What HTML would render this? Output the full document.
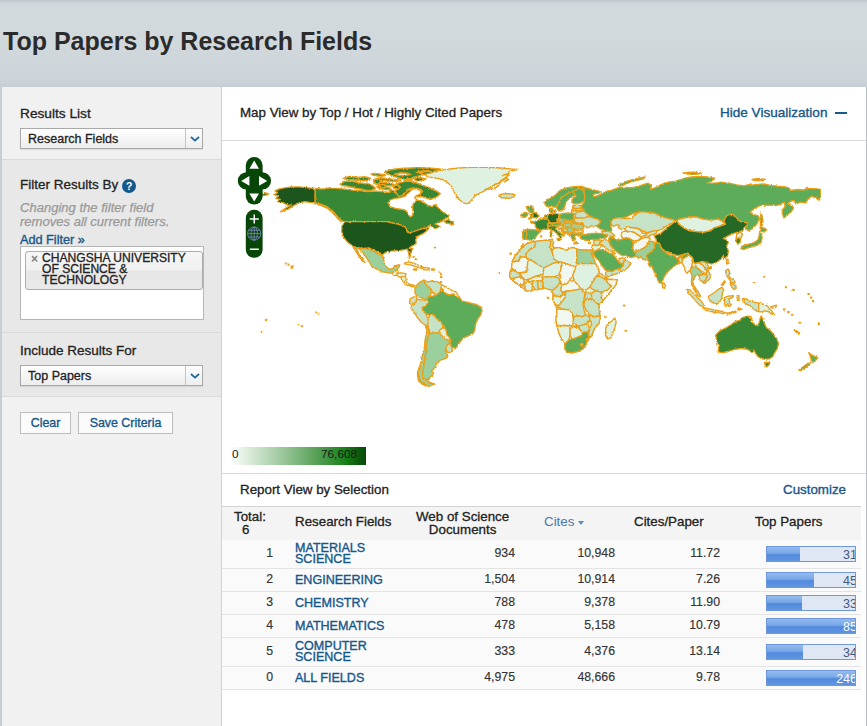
<!DOCTYPE html>
<html>
<head>
<meta charset="utf-8">
<title>Top Papers by Research Fields</title>
<style>
*{box-sizing:border-box;margin:0;padding:0}
html,body{width:867px;height:726px;overflow:hidden}
body{font-family:"Liberation Sans",sans-serif;color:#222;position:relative;
background:linear-gradient(to bottom,#bdc4ca 0,#cbd2d7 2px,#d2d9dd 4px,#d3dade 8px,#d2d9dd 40px,#ccd4d9 80px,#c6cfd5 87px,#c5ced5 100%)}
.abs{position:absolute;white-space:nowrap}
h1{position:absolute;left:3px;top:26px;font-size:25px;line-height:30px;font-weight:bold;color:#2b2b2b;white-space:nowrap}
#side{position:absolute;left:2px;top:87px;width:220px;height:639px;background:#f1f1f1;border-right:1px solid #d1d1d1}
#side .in{position:absolute;left:1px;top:1px;width:218px;height:638px}
#side .sec2{position:absolute;left:-1px;top:71px;width:219px;height:238px;background:#e8e8e8;border-top:1px solid #dadada;border-bottom:1px solid #dadada}
#side .div2{position:absolute;left:-1px;top:244px;width:219px;height:1px;background:#d8d8d8}
.lbl{font-size:13.35px;font-weight:normal;color:#222;line-height:16px;-webkit-text-stroke:0.3px #222}
.link{color:#15578a;font-weight:normal;-webkit-text-stroke:0.35px #15578a}
.sel{position:absolute;left:17px;width:183px;height:21px;border:1px solid #a9a9a9;background:linear-gradient(#fff,#ededed);font-size:12.5px;font-weight:normal;-webkit-text-stroke:0.3px #222;color:#222;line-height:21px;padding-left:7px;box-shadow:0 1px 1px rgba(0,0,0,.08)}
.sel i{position:absolute;right:0;top:0;width:17px;height:19px;border-left:1px solid #c4c4c4;background:linear-gradient(#fdfdfd,#eee)}
.sel i svg{position:absolute;left:4px;top:7px}
.btn{position:absolute;top:324px;height:22px;border:1px solid #bdbdbd;background:#fbfbfb;font-size:12.4px;font-weight:normal;-webkit-text-stroke:0.35px #15578a;color:#15578a;line-height:20px;text-align:center}
#main{position:absolute;left:222px;top:87px;width:644px;height:639px;background:#fff}
.hr{position:absolute;left:0;width:644px;height:1px;background:#d9d9d9}
table{border-collapse:collapse}
#tbl{position:absolute;left:0;top:419px;width:639px;border-top:1px solid #d4d4d4}
.row{position:absolute;left:0;width:639px;background:#fafafa;border-bottom:1px solid #e4e4e4;font-size:12.3px;color:#333;-webkit-text-stroke:0.15px #333}
.row span{position:absolute;white-space:nowrap}
.num{text-align:right}
.bar{position:absolute;left:544px;width:90px;height:16px;border:1px solid #6f97dc;background:#dfe7f4;overflow:hidden}
.bar b{position:absolute;left:0;top:0;height:14px;background:linear-gradient(#94bbee 0,#78a7e6 45%,#5189db 55%,#6195e0 100%)}
.bar em{position:absolute;right:-2px;top:1px;font-style:normal;font-size:12.5px;line-height:14px;color:#3f5a80;-webkit-text-stroke:0}
</style>
</head>
<body>
<h1>Top Papers by Research Fields</h1>

<div id="side"><div class="in">
  <div class="abs lbl" style="left:17px;top:18px;font-size:13.7px">Results List</div>
  <div class="sel" style="top:40px">Research Fields<i><svg width="10" height="6" viewBox="0 0 10 6"><path d="M1 1 L5 4.6 L9 1" fill="none" stroke="#1c6a9c" stroke-width="1.8"/></svg></i></div>
  <div class="sec2"></div>
  <div class="abs lbl" style="left:17px;top:89px;font-size:13.5px">Filter Results By</div>
  <div class="abs" style="left:119px;top:91px;width:14px;height:14px;border-radius:7px;background:#14578a;color:#fff;font-size:11px;font-weight:bold;line-height:14px;text-align:center">?</div>
  <div class="abs" style="left:17px;top:113px;font-size:13.05px;font-style:italic;color:#999;-webkit-text-stroke:0.25px #999;line-height:13.7px">Changing the filter field<br>removes all current filters.</div>
  <div class="abs lbl link" style="left:17px;top:144px;font-size:12.7px">Add Filter »</div>
  <div class="abs" style="left:17px;top:158px;width:184px;height:74px;border:1px solid #b5b5b5;background:#fff"></div>
  <div class="abs" style="left:22px;top:163px;width:178px;height:39px;border:1px solid #adadad;border-radius:3px;background:linear-gradient(#f6f6f6 0,#f0f0f0 49%,#e6e6e6 51%,#e9e9e9 100%)"></div>
  <div class="abs" style="left:28px;top:165px;font-size:12px;font-weight:bold;color:#808080;line-height:12px">×</div>
  <div class="abs" style="left:39px;top:165px;font-size:12.1px;font-weight:normal;-webkit-text-stroke:0.3px #222;color:#222;line-height:10.8px">CHANGSHA UNIVERSITY<br>OF SCIENCE &amp;<br>TECHNOLOGY</div>
  <div class="div2"></div>
  <div class="abs lbl" style="left:17px;top:255px;font-size:13.5px">Include Results For</div>
  <div class="sel" style="top:277px">Top Papers<i><svg width="10" height="6" viewBox="0 0 10 6"><path d="M1 1 L5 4.6 L9 1" fill="none" stroke="#1c6a9c" stroke-width="1.8"/></svg></i></div>
  <div class="btn" style="left:17px;width:51px">Clear</div>
  <div class="btn" style="left:75px;width:95px">Save Criteria</div>
</div></div>

<div id="main">
  <div class="abs lbl" style="left:18px;top:17.7px">Map View by Top / Hot / Highly Cited Papers</div>
  <div class="abs lbl link" style="left:498px;top:17.7px;font-size:13.55px">Hide Visualization</div>
  <div class="abs" style="left:613px;top:25px;width:12px;height:2px;background:#185a88"></div>
  <div class="hr" style="top:53px"></div>

  <!--MAP-->
  <svg id="map" class="abs" style="left:0;top:54px" width="644" height="332" viewBox="222 141 644 332"><defs><filter id="rg" x="0" y="0" width="100%" height="100%" filterUnits="objectBoundingBox"><feTurbulence type="fractalNoise" baseFrequency="0.45" numOctaves="2" seed="7" result="n"/><feDisplacementMap in="SourceGraphic" in2="n" scale="2.4" xChannelSelector="R" yChannelSelector="G"/></filter></defs><g filter="url(#rg)" stroke="#eb9f17" stroke-width="1.3" stroke-linejoin="round">
<path d="M646.1,237.3 656.4,232.6 658.0,238.4 656.4,243.0 652.3,242.0 649.7,239.4Z" fill="#f1f8f1" stroke="none"/>
<path d="M612.3,236.3 617.0,239.4 633.6,239.9 633.6,246.1 610.8,246.1Z" fill="#5bac5a" stroke="none"/>
<path d="M593.1,239.4 608.7,239.4 610.8,246.1 600.4,246.1 593.1,245.6Z" fill="#c6e2c7" stroke="none"/>
<path d="M621.1,230.6 641.9,230.6 641.9,239.9 621.1,238.9Z" fill="#dff1e0" stroke="none"/>
<path d="M557.0,219.0 574.7,219.0 584.4,224.2 583.6,233.9 571.5,234.7 563.4,233.9 557.0,226.6Z" fill="#9bcf9b" stroke="none"/>
<path d="M572.1,206.0 581.3,205.6 588.8,214.6 586.5,218.1 575.0,218.1 571.7,212.3Z" fill="#c6e2c7" stroke="none"/>
<path d="M340.1,184.1 343.9,181.6 349.0,180.9 354.0,181.6 359.1,182.8 364.2,183.5 369.3,184.1 373.1,186.0 375.6,188.5 371.8,190.4 366.7,190.4 361.6,189.2 356.6,188.5 351.5,187.3 346.4,186.0 342.0,185.4Z" fill="#388736" stroke-width="1.5"/>
<path d="M343.2,178.4 349.0,176.5 355.3,177.1 360.4,178.4 365.4,179.0 369.9,179.7 366.7,180.9 360.4,180.3 354.0,180.0 347.7,179.7Z" fill="#388736" stroke-width="1.5"/>
<path d="M371.2,174.0 375.6,173.3 380.7,174.2 385.7,175.0 383.2,176.2 378.1,175.9 373.1,175.2Z" fill="#388736" stroke-width="1.5"/>
<path d="M384.5,172.1 389.6,170.1 395.9,168.9 403.5,168.2 411.1,167.9 418.7,167.6 426.3,167.9 434.0,168.4 440.3,169.1 436.5,170.8 431.4,172.1 426.3,173.3 422.5,174.6 418.7,175.9 414.9,177.1 411.1,178.4 406.0,179.0 401.0,178.4 395.9,177.1 390.8,175.2 387.0,173.7Z" fill="#388736" stroke-width="1.5"/>
<path d="M394.6,174.2 401.0,172.7 407.3,173.2 411.1,174.2 406.0,175.2 399.7,175.5Z" fill="#ffffff" stroke-width="1.5"/>
<path d="M416.2,172.2 422.5,170.9 428.9,170.7 426.3,172.2 421.3,173.2Z" fill="#ffffff" stroke-width="1.5"/>
<path d="M375.6,179.0 380.7,177.8 385.7,178.4 390.8,179.0 395.9,179.7 401.0,180.3 397.2,181.6 392.1,181.3 387.0,180.9 381.9,180.3 376.9,180.3Z" fill="#388736" stroke-width="1.5"/>
<path d="M375.6,183.5 380.7,182.2 385.7,182.8 390.8,183.5 394.6,184.7 392.1,186.0 387.0,185.4 381.9,184.7 377.5,184.7Z" fill="#388736" stroke-width="1.5"/>
<path d="M376.9,186.6 381.9,186.0 387.0,186.9 390.8,188.5 388.3,189.8 383.2,189.2 378.8,188.2Z" fill="#388736" stroke-width="1.5"/>
<path d="M395.9,184.1 401.0,182.2 406.0,180.9 411.1,181.6 416.2,182.8 421.3,184.7 426.3,186.6 431.4,188.5 436.5,191.1 440.3,193.6 437.8,196.2 434.0,198.1 430.2,199.3 426.3,198.1 422.5,196.8 417.5,196.8 414.9,194.9 418.7,193.0 422.5,191.7 421.3,189.8 417.5,188.5 413.7,188.2 409.9,188.5 407.3,190.4 404.8,193.0 402.2,195.5 398.4,196.8 394.6,195.5 393.4,193.0 395.9,190.4 398.4,187.9 397.2,186.0Z" fill="#388736" stroke-width="1.5"/>
<path d="M403.5,179.3 408.6,179.0 412.4,179.8 409.9,180.8 405.4,180.6Z" fill="#388736" stroke-width="1.5"/>
<path d="M357.0,177.5 364.5,176.7 370.5,178.2 367.5,180.5 360.0,180.2Z" fill="#388736" stroke-width="1.5"/>
<path d="M373.5,179.7 378.0,179.0 381.0,181.2 378.0,184.2 374.2,183.5Z" fill="#388736" stroke-width="1.5"/>
<path d="M393.0,185.7 398.2,185.0 400.5,187.2 397.5,189.2 393.7,188.3Z" fill="#388736" stroke-width="1.5"/>
<path d="M414.0,178.2 420.0,177.5 426.0,179.0 421.5,180.8 415.5,180.5Z" fill="#388736" stroke-width="1.5"/>
<path d="M379.5,185.0 384.0,184.4 385.8,186.8 382.5,188.3 379.8,187.1Z" fill="#388736" stroke-width="1.5"/>
<path d="M420.0,172.7 427.5,171.2 433.5,171.8 429.0,174.2 423.0,174.8Z" fill="#388736" stroke-width="1.5"/>
<path d="M315.0,188.4 322.7,189.1 330.1,187.8 337.5,188.3 345.0,189.2 352.5,190.2 360.0,190.7 367.5,191.7 375.0,191.0 382.5,191.7 390.0,192.5 389.6,189.4 393.4,190.4 395.9,192.4 398.4,196.2 402.2,195.8 404.8,193.2 407.3,190.7 409.9,189.2 414.0,188.7 418.5,189.5 421.5,191.7 420.0,194.3 416.2,195.5 414.7,197.7 417.0,200.0 420.0,200.7 423.7,202.2 427.5,205.2 432.0,206.7 435.0,204.5 437.2,206.7 441.0,210.5 444.0,212.7 448.5,215.0 449.2,216.5 447.0,218.0 444.0,219.5 441.7,221.7 438.0,222.5 435.0,224.0 438.7,225.5 440.2,227.0 435.0,228.5 432.0,227.0 430.5,224.7 428.2,226.2 426.0,228.5 423.0,228.5 418.5,230.0 414.0,231.5 409.5,233.0 407.2,232.2 406.5,229.2 405.0,227.0 402.0,225.5 397.5,224.0 393.0,223.2 387.0,221.7 345.0,221.7 342.0,221.0 339.0,218.0 336.0,215.0 333.0,211.2 330.0,209.0 327.4,207.2 320.9,204.4 315.0,203.1Z" fill="#388736"/>
<path d="M388.5,203.0 390.0,200.0 394.5,198.5 400.5,197.7 405.0,196.2 408.0,193.2 411.0,190.2 414.0,188.7 418.5,189.5 421.5,191.7 420.0,194.3 416.2,195.5 414.7,197.7 417.0,200.0 415.5,201.5 413.2,203.7 412.5,207.5 413.2,212.0 412.5,215.7 410.2,216.8 408.0,214.2 406.5,211.2 403.5,209.7 399.0,209.0 394.5,208.2 390.0,206.7Z" fill="#ffffff"/>
<path d="M444.0,221.0 448.5,219.5 453.0,221.7 453.7,224.7 450.0,224.0 446.2,223.2Z" fill="#388736"/>
<path d="M315.0,188.4 308.0,187.8 299.7,186.9 291.4,186.9 284.0,187.8 278.5,189.1 274.8,191.0 277.5,192.8 273.8,194.7 278.5,196.1 275.7,198.4 280.3,199.5 277.5,201.7 283.1,202.6 287.7,205.4 291.4,205.0 285.8,208.1 280.3,211.8 287.7,209.4 294.1,205.4 299.7,202.6 305.2,201.7 310.7,202.6 315.0,203.1 320.9,204.4 327.4,207.2 332.9,212.7 337.5,218.3 341.2,222.0 338.4,218.7 333.4,213.7 327.5,208.3 320.9,205.4 315.0,203.9Z" fill="#1a571a"/>
<path d="M261.8,193.9 265.5,192.8 268.9,193.9 265.5,195.4 262.2,195.4Z" fill="#1a571a"/>
<path d="M345.0,221.7 387.0,221.7 393.0,223.2 397.5,224.0 402.0,225.5 405.0,227.0 406.5,229.2 407.2,232.2 409.5,233.0 414.0,231.5 418.5,230.0 423.0,228.5 426.0,228.5 428.2,226.7 429.0,228.5 426.0,231.5 423.0,233.7 420.0,235.2 417.0,236.7 415.8,239.7 416.2,243.5 414.0,245.0 411.0,246.5 409.2,248.3 413.0,248.3 411.0,251.2 410.5,255.3 409.5,258.6 408.8,254.0 407.5,249.2 398.5,250.6 391.1,251.1 385.5,252.4 381.8,255.2 382.7,256.1 380.0,253.3 374.4,250.6 368.9,247.8 363.3,248.7 356.0,247.4 352.3,246.0 347.7,242.3 343.0,236.7 341.6,231.2 342.1,225.7 344.5,221.6Z" fill="#1a571a"/>
<path d="M356.5,247.7 359.7,248.3 365.4,248.3 369.2,249.0 372.4,250.9 374.9,251.5 377.4,253.4 380.6,255.3 383.1,256.8 383.8,259.7 383.8,262.3 385.0,265.4 387.6,268.0 390.7,269.3 393.3,268.2 394.6,266.1 397.1,265.2 399.9,264.8 399.0,267.4 397.1,269.3 395.8,271.2 393.3,271.8 392.7,273.7 390.1,273.1 386.3,272.4 382.5,271.8 378.7,269.9 374.9,268.2 371.7,266.5 370.2,263.5 368.2,260.4 366.0,257.2 363.5,254.0 360.9,250.9 359.0,249.0Z" fill="#9bcf9b"/>
<path d="M353.3,247.1 355.9,247.7 357.1,250.2 359.0,254.0 361.6,257.8 364.1,261.0 364.4,262.3 362.2,261.0 359.7,257.2 357.1,253.4 355.0,250.0Z" fill="#9bcf9b"/>
<path d="M392.7,273.7 393.3,271.8 395.8,271.2 397.1,269.3 398.1,271.2 397.7,273.1 396.5,275.6 393.9,275.3Z" fill="#dff1e0"/>
<path d="M397.7,273.1 400.9,272.8 406.0,273.7 405.3,276.2 402.8,277.5 399.6,276.9 396.5,275.6Z" fill="#dff1e0"/>
<path d="M400.9,276.9 405.3,276.2 406.2,278.8 405.7,281.3 403.4,281.7 401.5,279.4Z" fill="#dff1e0"/>
<path d="M403.4,281.7 405.7,281.3 408.5,283.8 411.0,284.5 414.9,285.7 414.2,287.0 410.4,286.0 407.2,285.1 404.7,283.8Z" fill="#dff1e0"/>
<path d="M403.4,263.5 408.5,261.9 413.6,263.2 418.7,265.4 423.7,267.4 421.2,268.2 417.4,267.4 412.3,265.4 407.2,264.4Z" fill="#dff1e0"/>
<path d="M421.2,268.2 425.6,267.5 429.4,268.2 428.8,269.8 423.7,269.8Z" fill="#dff1e0"/>
<path d="M413.6,269.0 416.8,269.0 416.8,270.0 413.8,270.0Z" fill="#dff1e0"/>
<path d="M431.3,269.0 434.5,269.0 434.5,270.0 431.6,270.0Z" fill="#dff1e0"/>
<path d="M413.1,256.4 414.1,256.4 414.1,257.2 413.1,257.2Z" fill="#dff1e0"/>
<path d="M415.0,258.7 416.0,258.7 416.0,259.5 415.0,259.5Z" fill="#dff1e0"/>
<path d="M434.4,247.1 435.4,247.1 435.4,247.8 434.4,247.8Z" fill="#dff1e0"/>
<path d="M439.1,271.4 440.1,271.4 440.1,272.2 439.1,272.2Z" fill="#dff1e0"/>
<path d="M440.4,274.0 441.4,274.0 441.4,274.7 440.4,274.7Z" fill="#dff1e0"/>
<path d="M440.7,276.7 441.8,276.7 441.8,277.5 440.7,277.5Z" fill="#dff1e0"/>
<path d="M440.4,281.6 441.4,281.6 441.4,282.3 440.4,282.3Z" fill="#dff1e0"/>
<path d="M427.3,297.3 430.9,296.3 435.9,294.9 439.9,291.9 442.9,289.9 444.9,292.9 448.8,294.9 453.8,293.9 456.8,296.9 459.8,297.9 461.8,300.9 467.8,302.3 475.8,304.3 480.8,306.9 482.2,309.9 480.8,314.9 477.8,318.9 475.8,323.9 474.8,329.9 472.8,333.9 467.8,335.9 463.8,337.9 460.8,340.9 458.8,343.9 456.8,346.9 454.8,348.9 451.8,346.9 448.8,343.9 450.8,340.9 449.8,337.9 446.9,334.9 445.9,329.9 443.9,326.9 441.9,323.9 439.9,320.9 435.9,317.9 433.9,314.9 429.9,314.9 425.9,313.9 422.9,310.9 421.9,307.9 424.9,305.9 427.9,302.9 427.3,299.9Z" fill="#5bac5a"/>
<path d="M414.9,288.9 416.9,285.0 419.9,282.0 423.9,280.0 424.9,283.0 427.9,286.9 430.9,288.9 430.9,292.9 429.9,296.3 427.3,297.3 427.3,299.9 423.9,298.9 419.9,297.5 416.9,295.9 414.9,292.9Z" fill="#9bcf9b"/>
<path d="M423.9,280.0 427.9,282.0 431.9,281.0 437.9,282.0 441.9,285.0 440.9,288.9 439.9,291.9 435.9,294.9 432.9,292.9 430.9,288.9 427.9,286.9 424.9,283.0Z" fill="#c6e2c7"/>
<path d="M441.9,285.0 445.9,286.9 450.8,289.9 455.8,291.9 459.8,297.9 456.8,296.9 453.8,293.9 448.8,294.9 444.9,292.9 442.9,289.9 440.9,288.9Z" fill="#f1f8f1"/>
<path d="M409.9,298.9 414.9,296.3 416.9,295.9 416.9,298.9 415.9,302.3 411.9,304.9 409.5,302.9Z" fill="#c6e2c7"/>
<path d="M411.9,304.9 415.9,302.3 416.9,298.9 419.9,299.9 427.3,299.9 427.9,302.9 424.9,305.9 421.9,307.9 422.9,310.9 425.9,313.9 427.9,318.9 427.5,325.9 424.9,324.9 420.9,321.9 416.9,316.9 413.9,311.9 410.9,307.9Z" fill="#c6e2c7"/>
<path d="M427.9,318.9 429.9,314.9 433.9,314.9 435.9,317.9 439.9,320.9 441.9,323.9 443.9,326.9 439.9,329.9 438.9,332.9 433.9,332.9 430.9,333.9 428.9,329.9 427.9,325.9Z" fill="#c6e2c7"/>
<path d="M439.9,329.9 443.9,326.9 445.9,329.9 446.9,334.9 449.8,337.9 448.8,340.9 444.9,338.9 441.9,335.9 438.9,332.9Z" fill="#dff1e0"/>
<path d="M427.5,325.9 428.9,329.9 428.7,330.0 429.1,333.6 427.8,338.1 426.9,342.5 426.4,347.0 426.0,351.5 425.1,356.9 424.2,362.2 423.7,367.6 422.8,373.0 422.4,376.6 424.2,378.8 426.9,380.1 428.7,381.9 431.3,383.3 434.9,384.2 431.3,385.5 428.7,386.4 425.1,385.1 421.5,383.3 419.2,381.5 418.4,377.5 417.9,373.9 418.4,371.2 420.1,368.5 420.1,364.9 421.5,360.4 421.9,356.9 423.7,351.5 424.6,346.1 424.9,340.7 426.0,335.4 426.9,330.0 425.5,326.9Z" fill="#9bcf9b"/>
<path d="M430.9,333.9 433.9,332.9 438.9,332.9 441.9,335.9 444.9,338.9 448.8,340.9 450.8,340.9 450.1,342.5 447.5,344.8 446.1,347.0 445.2,350.1 446.1,352.8 447.9,356.0 446.6,358.2 443.9,359.1 439.4,360.4 438.5,362.7 435.8,363.1 436.7,365.4 434.5,367.6 433.1,369.8 431.3,371.2 433.6,373.0 432.7,375.2 430.4,376.6 429.1,378.8 427.8,380.1 424.2,378.8 422.4,376.6 422.8,373.0 423.7,367.6 424.2,362.2 425.1,356.9 426.0,351.5 426.4,347.0 426.9,342.5 427.8,338.1 429.1,333.6 428.7,330.0 428.9,329.9Z" fill="#9bcf9b"/>
<path d="M446.1,347.0 447.5,344.8 450.1,343.4 451.9,347.9 452.4,350.6 450.1,352.4 447.5,352.4 446.1,350.1Z" fill="#c6e2c7"/>
<path d="M420.1,365.8 418.4,371.2 417.9,374.8 418.8,380.1 422.4,383.7 428.7,386.2" fill="none" stroke-width="2.2"/>
<path d="M426.9,381.0 430.4,382.8 434.5,384.3" fill="none" stroke-width="1.6"/>
<path d="M285.0,262.7 286.4,262.7 286.4,264.1 285.0,264.1Z" fill="#eb9f17" stroke-width="0.6"/>
<path d="M287.8,263.9 289.2,263.9 289.2,265.3 287.8,265.3Z" fill="#eb9f17" stroke-width="0.6"/>
<path d="M290.7,265.7 293.3,265.7 293.3,268.3 290.7,268.3Z" fill="#eb9f17" stroke-width="0.6"/>
<path d="M265.3,319.1 267.1,319.1 267.1,320.9 265.3,320.9Z" fill="#eb9f17" stroke-width="0.6"/>
<path d="M260.8,331.2 262.0,331.2 262.0,332.4 260.8,332.4Z" fill="#eb9f17" stroke-width="0.6"/>
<path d="M297.9,324.2 298.9,324.2 298.9,325.2 297.9,325.2Z" fill="#eb9f17" stroke-width="0.6"/>
<path d="M301.1,325.4 302.7,325.4 302.7,327.0 301.1,327.0Z" fill="#eb9f17" stroke-width="0.6"/>
<path d="M315.8,311.8 317.0,311.8 317.0,313.0 315.8,313.0Z" fill="#eb9f17" stroke-width="0.6"/>
<path d="M317.9,313.2 319.1,313.2 319.1,314.4 317.9,314.4Z" fill="#eb9f17" stroke-width="0.6"/>
<path d="M424.3,174.9 433.5,172.1 442.7,169.9 453.8,168.5 464.9,167.5 479.7,167.0 494.4,167.5 505.5,168.5 517.5,169.4 509.2,171.8 507.3,174.9 505.5,178.6 501.8,181.4 498.1,183.2 492.6,186.0 491.6,188.8 486.1,189.7 481.5,192.4 476.0,195.2 472.3,198.9 469.5,202.6 466.7,203.9 463.0,202.6 459.4,199.8 456.6,196.1 453.8,191.5 452.0,186.9 448.3,183.2 444.6,180.4 439.1,178.6 433.5,177.7 428.0,176.8Z" fill="#dff1e0"/>
<path d="M499.0,195.2 502.7,193.9 509.2,193.6 515.1,194.7 514.3,196.9 509.2,198.4 503.6,198.0 500.0,196.9Z" fill="#c6e2c7"/>
<path d="M490.7,187.8 495.3,184.1 500.0,182.8 498.1,186.0 493.5,188.8" fill="none" stroke-width="1.5"/>
<path d="M500.0,181.4 505.5,177.7 508.3,179.5 503.6,182.3" fill="none" stroke-width="1.5"/>
<path d="M501.8,175.8 509.2,173.1 507.3,176.8" fill="none" stroke-width="1.5"/>
<path d="M486.1,189.7 490.7,186.9 492.6,189.7" fill="none" stroke-width="1.5"/>
<path d="M509.2,171.8 513.8,169.9 517.5,169.4" fill="none" stroke-width="1.5"/>
<path d="M544.8,201.9 546.7,199.6 550.8,197.9 554.8,195.6 558.3,192.1 561.1,189.8 565.7,188.1 571.5,186.9 577.3,186.3 581.9,186.3 584.8,187.5 582.5,189.2 579.6,188.7 576.1,189.8 572.7,191.5 569.2,192.7 566.3,194.4 563.4,196.1 561.1,198.5 559.4,201.3 557.7,204.8 555.9,207.1 553.6,207.1 551.9,206.0 549.0,206.5 546.1,206.0 545.0,204.2Z" fill="#5bac5a"/>
<path d="M557.7,204.8 559.4,201.3 561.1,198.5 563.4,196.1 566.3,194.4 569.2,192.7 572.7,191.5 574.1,192.9 575.0,194.8 573.2,196.4 570.4,197.9 568.1,199.6 566.3,201.3 565.5,203.6 564.8,206.5 563.4,209.4 561.1,211.1 558.8,211.1 557.1,208.8 556.5,207.1Z" fill="#5bac5a"/>
<path d="M574.1,192.9 572.7,191.5 576.1,189.8 579.6,188.7 582.5,189.2 584.2,192.7 584.8,197.3 584.2,200.8 581.3,202.8 577.3,203.6 573.6,203.8 572.0,202.1 572.0,199.8 573.5,198.1 576.1,196.1 575.2,194.8Z" fill="#5bac5a"/>
<path d="M572.7,206.0 576.1,205.1 580.7,205.4 581.7,207.1 579.0,208.3 575.0,208.3 572.7,207.7Z" fill="#c6e2c7"/>
<path d="M571.5,208.8 575.0,208.3 579.0,208.3 581.9,208.8 582.5,210.2 579.6,210.9 575.0,210.6 571.7,210.2Z" fill="#c6e2c7"/>
<path d="M571.5,210.9 575.0,210.6 579.6,210.9 580.2,212.9 577.9,214.0 573.8,213.7 571.7,212.5Z" fill="#c6e2c7"/>
<path d="M576.1,212.9 580.2,211.7 584.2,211.1 586.5,213.4 588.8,215.2 587.1,216.9 584.2,218.1 579.6,218.1 575.6,217.5 575.0,215.2Z" fill="#c6e2c7"/>
<path d="M575.0,218.1 579.6,218.1 584.2,218.1 587.1,216.9 591.1,216.9 594.6,218.1 598.0,219.2 600.4,220.9 599.8,223.3 598.0,225.0 595.7,225.6 593.4,226.1 591.1,225.6 590.0,227.3 587.1,227.9 585.9,226.1 584.2,225.6 583.1,223.8 580.7,224.4 577.9,223.3 575.0,221.5 573.8,219.8Z" fill="#c6e2c7"/>
<path d="M560.2,214.1 563.4,213.3 568.3,212.9 573.1,213.7 574.3,215.7 573.5,218.2 573.9,219.8 570.7,220.2 567.5,220.2 564.3,219.4 561.0,218.6 559.4,217.0Z" fill="#5bac5a"/>
<path d="M547.3,215.7 548.9,214.1 551.3,213.7 553.8,213.3 556.2,213.7 559.0,214.1 559.2,216.1 558.6,218.2 556.6,219.4 557.4,221.0 556.6,222.6 553.8,223.0 550.9,223.0 548.9,221.8 548.1,219.8 547.3,218.2Z" fill="#266926"/>
<path d="M549.7,208.9 551.7,208.1 552.9,209.3 553.4,211.3 552.1,212.9 550.1,212.9 549.6,210.9Z" fill="#5bac5a"/>
<path d="M553.8,210.5 555.4,210.3 555.5,212.1 554.1,212.3Z" fill="#5bac5a"/>
<path d="M544.5,215.3 547.3,214.5 547.7,216.1 547.1,217.6 544.7,217.4Z" fill="#388736"/>
<path d="M542.0,217.4 544.7,217.4 547.1,217.6 546.1,219.2 544.5,218.4 542.5,219.1Z" fill="#5bac5a"/>
<path d="M529.9,222.2 532.4,221.4 534.8,221.8 537.6,220.6 540.0,219.4 542.5,219.1 544.5,218.4 546.1,219.2 548.1,219.8 549.3,221.4 548.5,223.0 547.3,224.6 547.7,226.6 548.1,228.3 546.1,229.5 543.3,229.1 540.8,230.3 538.4,229.9 536.4,228.7 535.6,226.6 535.2,224.2 533.6,223.3 532.4,223.0Z" fill="#388736"/>
<path d="M526.3,206.9 528.7,206.1 531.1,205.7 533.2,206.5 532.4,208.1 534.0,209.3 533.2,210.9 534.4,212.5 533.2,212.9 532.8,214.1 533.2,215.7 532.4,217.4 531.1,218.4 528.3,219.2 529.1,217.9 530.7,217.4 531.1,215.7 529.9,214.5 530.7,213.3 529.5,212.1 528.3,210.5 527.1,208.9Z" fill="#5bac5a"/>
<path d="M533.2,212.9 534.4,212.5 536.4,213.3 538.0,214.9 539.2,215.7 538.4,217.0 536.4,217.6 534.0,217.9 532.4,217.4 533.2,215.7 532.8,214.1Z" fill="#266926"/>
<path d="M521.1,214.5 523.1,212.9 526.3,212.5 527.9,213.7 527.1,216.1 524.7,217.4 521.9,217.0 520.7,215.7Z" fill="#5bac5a"/>
<path d="M525.9,231.1 523.5,230.3 527.1,229.5 531.1,229.5 535.2,229.9 538.4,230.3 540.8,231.1 539.2,233.1 537.2,234.7 536.0,236.7 534.8,238.8 532.0,240.0 528.3,240.0 526.3,239.2 526.3,236.3 527.1,233.9Z" fill="#5bac5a"/>
<path d="M522.3,231.9 525.9,231.1 527.1,233.9 526.3,236.3 526.3,239.2 523.5,239.6 522.3,237.1 523.1,234.3Z" fill="#5bac5a"/>
<path d="M540.7,236.0 541.8,236.0 541.8,236.8 540.7,236.8Z" fill="#5bac5a"/>
<path d="M548.1,226.6 549.7,225.8 552.1,225.7 554.6,225.8 557.0,226.2 556.6,227.9 555.4,228.7 557.0,230.3 559.0,231.9 561.4,233.5 563.4,234.7 564.3,235.9 562.6,235.9 561.0,235.1 561.8,237.1 560.2,237.9 559.0,236.3 557.4,234.3 555.4,232.3 553.4,230.7 551.3,229.5 549.3,229.1 548.1,228.3Z" fill="#388736"/>
<path d="M557.0,238.8 560.2,238.4 561.4,239.2 559.4,240.4 557.4,240.0Z" fill="#388736"/>
<path d="M549.9,232.3 551.7,231.9 552.1,234.7 551.3,237.1 550.1,236.7Z" fill="#388736"/>
<path d="M550.5,229.5 551.5,229.2 551.7,231.5 550.8,231.6Z" fill="#388736"/>
<path d="M547.7,223.8 550.5,223.4 552.1,224.2 551.3,225.4 548.5,225.7Z" fill="#388736"/>
<path d="M552.1,223.4 555.4,223.0 558.6,222.6 561.4,223.0 561.0,224.6 557.8,225.4 554.6,225.7 552.5,225.0Z" fill="#5bac5a"/>
<path d="M557.4,219.4 560.2,218.6 563.4,219.0 566.3,220.2 564.3,221.4 561.0,221.8 558.2,221.4Z" fill="#9bcf9b"/>
<path d="M564.3,221.8 566.7,220.8 571.5,221.0 573.1,221.4 571.5,222.6 567.5,223.0 565.1,223.0Z" fill="#c6e2c7"/>
<path d="M562.6,224.6 565.1,223.4 568.3,223.3 573.1,222.6 575.1,223.8 573.9,225.8 570.7,227.0 566.7,227.5 563.8,226.6Z" fill="#9bcf9b"/>
<path d="M557.8,225.8 561.0,225.0 563.4,226.6 566.7,227.6 566.7,229.1 564.3,229.5 563.4,228.3 561.0,227.9 561.4,229.5 563.4,231.5 565.9,233.1 564.7,233.5 561.8,231.5 559.8,229.5 558.2,227.9Z" fill="#c6e2c7"/>
<path d="M563.4,228.3 566.7,229.1 567.5,231.1 565.9,232.7 563.4,231.1Z" fill="#c6e2c7"/>
<path d="M567.1,227.5 570.7,227.3 573.1,228.7 573.5,231.1 571.5,233.1 569.1,232.7 567.5,231.1Z" fill="#9bcf9b"/>
<path d="M571.1,224.6 573.9,223.4 578.0,223.8 582.0,224.6 584.0,226.6 583.6,228.7 580.4,229.5 576.8,229.5 573.5,228.7 571.5,227.0Z" fill="#9bcf9b"/>
<path d="M580.7,222.7 583.1,223.8 583.3,225.9 581.7,224.8Z" fill="#c6e2c7"/>
<path d="M573.5,230.3 578.0,230.0 582.8,229.5 582.8,231.9 579.6,233.1 575.6,233.1 573.5,232.3Z" fill="#c6e2c7"/>
<path d="M567.9,232.7 571.5,233.3 573.1,233.5 570.7,235.5 569.1,235.1Z" fill="#c6e2c7"/>
<path d="M569.9,234.3 573.1,233.5 575.6,233.9 579.6,233.5 578.8,235.1 575.6,235.4 574.3,236.7 575.6,238.8 573.9,240.8 571.9,238.8 570.7,236.7Z" fill="#5bac5a"/>
<path d="M573.8,242.9 578.4,242.6 578.4,243.7 574.1,243.8Z" fill="#5bac5a"/>
<path d="M580.2,236.5 583.1,234.8 588.8,233.6 595.7,233.1 601.5,233.6 606.1,234.2 607.3,236.5 605.0,238.2 600.4,238.8 595.7,240.0 592.3,239.4 588.8,240.6 584.2,240.0 580.7,238.8Z" fill="#5bac5a"/>
<path d="M577.9,233.3 581.3,233.1 581.9,234.8 579.0,235.4Z" fill="#5bac5a"/>
<path d="M588.4,242.6 590.5,242.3 590.5,243.4 588.6,243.6Z" fill="#c6e2c7"/>
<path d="M521.9,248.1 525.4,244.6 528.8,242.9 534.0,241.7 541.5,240.6 549.6,240.0 552.5,239.4 553.6,242.3 552.5,245.7 554.8,248.1 558.8,247.5 563.4,249.2 566.9,250.4 569.2,248.1 573.8,247.5 576.7,249.2 581.9,249.8 587.7,250.4 591.1,249.8 594.0,250.9 592.9,253.8 591.1,252.1 591.9,255.0 594.3,260.0 595.5,263.6 597.9,268.0 599.4,273.0 603.8,276.0 606.8,279.5 613.8,279.5 617.4,279.9 615.8,284.9 611.8,289.9 606.8,295.9 602.8,300.9 598.8,304.9 599.4,309.9 599.8,315.5 600.2,318.9 598.8,323.9 594.9,327.9 592.9,331.9 591.9,335.9 588.9,337.9 586.9,341.9 585.9,344.9 582.9,348.8 577.9,351.4 571.9,352.8 566.9,352.2 564.9,348.8 564.9,343.9 561.9,339.9 558.9,332.9 556.9,325.9 555.9,319.9 556.9,314.9 556.9,308.9 554.9,303.9 552.9,299.9 552.9,295.9 552.9,293.9 552.9,289.9 548.9,289.5 543.9,287.9 542.7,288.9 539.9,288.9 538.3,289.5 534.9,289.5 531.9,290.9 526.0,290.9 523.0,287.9 519.0,284.9 516.0,282.9 513.0,280.9 511.0,278.9 509.6,276.0 510.0,272.0 511.6,268.0 512.0,262.0 515.0,256.0 520.0,250.0 523.0,244.0Z" fill="#dff1e0"/>
<path d="M521.9,248.1 525.4,244.6 528.8,242.9 534.0,241.7 535.8,243.4 534.6,246.9 530.0,249.2 526.0,254.0 526.0,257.0 520.0,257.0 519.0,261.0 512.0,262.0 515.0,256.0 520.0,250.0 523.0,244.0Z" fill="#c6e2c7"/>
<path d="M534.0,241.7 541.5,240.6 549.6,240.0 550.8,242.3 550.2,246.9 551.9,251.5 552.3,252.0 553.9,259.0 558.9,262.0 553.9,263.0 543.9,268.0 536.9,264.0 526.0,257.0 526.0,254.0 530.0,249.2 534.6,246.9 535.8,243.4Z" fill="#c6e2c7"/>
<path d="M549.6,240.0 552.5,239.4 553.6,242.3 552.5,245.7 554.8,248.1 553.1,249.2 551.9,251.5 550.2,246.9 550.8,242.3Z" fill="#c6e2c7"/>
<path d="M553.1,249.2 554.8,248.1 558.8,247.5 563.4,249.2 566.9,250.4 569.2,248.1 573.8,247.5 576.7,249.2 576.9,264.0 575.9,267.0 561.9,262.4 558.9,262.0 553.9,259.0 552.3,252.0 551.9,251.5Z" fill="#dff1e0"/>
<path d="M576.7,249.2 581.9,249.8 587.7,250.4 591.1,249.8 594.0,250.9 592.9,253.8 591.1,252.1 591.9,255.0 594.3,260.0 595.5,263.6 576.9,263.6Z" fill="#9bcf9b"/>
<path d="M512.0,262.0 519.0,261.0 520.0,257.0 526.0,257.0 527.9,260.0 526.9,272.0 518.0,273.0 514.0,270.0 511.6,268.0Z" fill="#f1f8f1"/>
<path d="M526.0,257.0 536.9,264.0 543.9,268.0 542.9,274.0 535.9,276.0 529.9,278.9 525.0,279.9 522.0,276.9 520.0,273.0 526.9,272.0 527.9,260.0Z" fill="#dff1e0"/>
<path d="M543.9,268.0 553.9,263.0 558.9,262.0 561.9,262.4 560.9,270.0 558.9,275.0 553.9,276.9 547.9,276.9 542.9,276.9 542.9,274.0Z" fill="#dff1e0"/>
<path d="M561.9,262.4 575.9,267.0 572.9,275.0 569.9,279.9 566.9,283.9 561.9,284.9 559.9,279.9 560.9,276.0 558.9,275.0 560.9,270.0Z" fill="#f1f8f1"/>
<path d="M576.9,263.6 595.5,263.6 597.9,268.0 599.4,273.0 595.9,276.9 592.9,281.9 589.9,286.9 585.9,289.9 580.9,288.9 577.9,284.9 573.9,280.9 572.9,275.0 575.9,267.0Z" fill="#dff1e0"/>
<path d="M599.4,273.0 603.8,276.0 606.8,279.5 604.2,278.9 599.4,276.0 596.9,276.3Z" fill="#dff1e0"/>
<path d="M592.9,281.9 595.9,276.9 599.4,276.0 604.2,278.9 607.8,282.9 611.8,285.9 607.8,289.9 601.8,292.3 595.9,290.9 591.9,288.9 589.9,286.9Z" fill="#c6e2c7"/>
<path d="M607.8,282.9 605.8,279.5 613.8,279.5 617.4,279.9 615.8,284.9 611.8,289.9 606.8,295.9 602.8,300.9 601.4,297.9 601.8,292.3 607.8,289.9 611.8,285.9Z" fill="#f1f8f1"/>
<path d="M591.9,292.9 595.9,290.9 601.8,292.3 601.4,297.9 602.8,300.9 598.8,304.9 593.9,300.9 590.9,297.9Z" fill="#c6e2c7"/>
<path d="M510.0,272.0 514.0,270.0 518.0,273.0 520.0,274.0 520.0,276.9 515.0,277.9 511.0,278.9 509.6,276.0Z" fill="#c6e2c7"/>
<path d="M515.0,277.9 520.0,276.9 523.0,278.9 525.0,282.9 522.0,284.9 519.0,284.9 516.0,282.9 513.0,280.9Z" fill="#f1f8f1"/>
<path d="M519.0,284.9 522.0,284.9 525.0,286.9 526.0,290.9 523.0,287.9Z" fill="#dff1e0"/>
<path d="M525.0,282.9 529.9,281.9 532.3,284.9 531.9,290.9 526.0,290.9 525.0,286.9Z" fill="#dff1e0"/>
<path d="M529.9,278.9 535.9,276.0 542.3,276.9 542.3,280.9 537.9,280.9 532.9,280.9 529.9,281.9 526.9,280.9Z" fill="#dff1e0"/>
<path d="M532.9,280.9 537.9,280.9 538.3,289.5 534.9,289.5 532.3,284.9Z" fill="#c6e2c7"/>
<path d="M537.9,280.9 542.3,280.9 542.7,288.9 539.9,288.9 538.3,289.5Z" fill="#c6e2c7"/>
<path d="M542.9,277.9 547.9,276.9 553.9,276.9 558.9,277.9 559.9,282.9 556.9,286.9 552.9,289.9 548.9,289.5 543.9,287.9 542.3,282.9Z" fill="#c6e2c7"/>
<path d="M552.9,289.9 556.9,286.9 559.9,282.9 561.9,284.9 560.9,289.9 562.9,293.9 560.9,296.9 555.9,295.9 552.9,293.9Z" fill="#c6e2c7"/>
<path d="M561.9,284.9 566.9,283.9 569.9,280.9 573.9,280.9 577.9,284.9 580.9,288.9 575.9,289.9 569.9,290.9 565.9,290.9 562.9,292.3 560.9,289.9Z" fill="#f1f8f1"/>
<path d="M552.9,295.9 560.9,296.9 562.9,293.9 565.9,291.5 564.9,297.9 561.9,301.9 557.9,305.9 554.9,303.9 552.9,299.9Z" fill="#dff1e0"/>
<path d="M565.9,291.5 569.9,290.9 575.9,289.9 580.9,288.9 584.9,292.9 583.9,298.9 582.9,303.9 583.9,309.9 585.9,314.9 581.9,316.9 577.9,315.9 573.9,316.9 571.9,312.9 568.9,309.9 561.9,308.9 557.9,306.9 561.9,301.9 564.9,297.9Z" fill="#c6e2c7"/>
<path d="M585.5,292.9 590.9,292.9 591.9,297.9 587.9,299.5 584.9,298.9Z" fill="#c6e2c7"/>
<path d="M584.9,299.9 591.9,298.9 598.8,304.9 599.4,309.9 599.8,315.5 593.9,316.9 588.9,313.9 585.9,309.9 583.9,304.9Z" fill="#c6e2c7"/>
<path d="M556.9,308.9 568.9,309.9 571.9,312.9 572.9,316.9 573.9,321.9 571.9,325.9 563.9,325.5 556.9,325.5 555.9,319.9 556.9,314.9Z" fill="#f1f8f1"/>
<path d="M573.9,316.9 577.9,315.9 581.9,316.9 585.9,314.9 588.9,315.9 589.9,319.9 585.9,323.9 581.9,325.9 576.9,325.9 572.9,321.9Z" fill="#c6e2c7"/>
<path d="M588.9,315.9 593.9,316.9 599.8,315.5 600.2,318.9 598.8,323.9 594.9,327.9 592.9,331.9 591.9,335.9 588.9,337.9 588.9,332.9 589.9,327.9 591.9,323.9 589.9,319.9Z" fill="#c6e2c7"/>
<path d="M578.9,326.3 582.9,324.9 586.9,323.9 589.5,327.9 587.9,331.9 582.9,332.3 579.9,329.9Z" fill="#c6e2c7"/>
<path d="M569.9,327.9 577.9,326.9 579.9,329.9 582.9,332.3 580.9,335.9 575.9,337.9 571.9,338.9 569.9,334.9Z" fill="#dff1e0"/>
<path d="M556.9,325.9 563.9,325.5 571.9,325.9 577.9,326.3 569.9,327.9 569.9,334.9 568.9,339.9 564.9,343.9 561.9,339.9 558.9,332.9Z" fill="#dff1e0"/>
<path d="M564.9,343.9 568.9,339.9 571.9,338.9 575.9,337.9 580.9,335.9 582.9,332.3 587.9,331.9 588.9,337.9 586.9,341.9 585.9,344.9 582.9,348.8 577.9,351.4 571.9,352.8 566.9,352.2 564.9,348.8Z" fill="#5bac5a"/>
<path d="M580.3,343.9 582.7,343.5 583.1,345.5 580.9,346.1Z" fill="#dff1e0"/>
<path d="M586.3,339.1 587.9,339.1 587.9,340.9 586.3,340.9Z" fill="#dff1e0"/>
<path d="M605.8,327.9 607.8,323.9 611.8,320.9 614.8,317.9 616.2,321.9 614.8,327.9 612.8,332.9 610.8,337.9 607.4,338.9 605.4,334.9Z" fill="#dff1e0"/>
<path d="M498.4,272.6 499.6,272.6 499.6,273.4 498.4,273.4Z" fill="#dff1e0"/>
<path d="M510.0,253.2 511.2,253.2 511.2,254.0 510.0,254.0Z" fill="#dff1e0"/>
<path d="M547.3,297.5 548.5,297.5 548.5,298.3 547.3,298.3Z" fill="#dff1e0"/>
<path d="M604.8,316.5 606.0,316.5 606.0,317.3 604.8,317.3Z" fill="#dff1e0"/>
<path d="M625.2,330.5 626.4,330.5 626.4,331.3 625.2,331.3Z" fill="#dff1e0"/>
<path d="M623.6,305.1 624.8,305.1 624.8,305.9 623.6,305.9Z" fill="#dff1e0"/>
<path d="M592.6,252.9 595.2,250.8 598.3,249.3 602.5,249.8 605.6,250.8 608.7,252.9 612.3,253.9 614.9,256.5 617.0,259.6 619.1,262.2 622.2,263.8 623.2,265.9 621.1,267.9 618.0,269.0 614.9,270.0 611.8,271.6 608.7,271.1 605.6,270.5 603.5,267.9 601.4,264.8 599.3,261.7 596.7,258.6 594.2,256.0Z" fill="#5bac5a"/>
<path d="M612.1,251.5 614.4,252.0 614.5,254.0 612.4,253.8Z" fill="#c6e2c7"/>
<path d="M619.1,258.6 621.1,257.6 624.3,258.6 625.8,257.6 625.3,260.2 623.7,262.2 622.2,263.8 619.1,262.2Z" fill="#c6e2c7"/>
<path d="M625.3,260.2 627.4,261.2 631.0,263.3 629.4,265.9 626.9,268.5 624.3,270.5 621.1,271.6 620.1,269.0 621.1,267.9 623.2,265.9 623.7,262.2Z" fill="#c6e2c7"/>
<path d="M605.6,271.6 608.7,271.1 611.8,271.6 614.9,270.0 618.0,269.0 620.1,269.0 621.1,271.6 618.0,273.1 613.9,274.7 609.7,276.2 606.6,277.3 605.6,274.7Z" fill="#c6e2c7"/>
<path d="M601.4,241.0 604.5,239.9 608.2,239.9 609.2,242.0 610.2,245.1 612.3,247.7 614.4,250.3 611.8,251.3 608.7,250.3 605.6,247.7 602.5,245.6 599.9,244.6 599.3,243.0Z" fill="#c6e2c7"/>
<path d="M594.2,240.4 598.3,239.9 601.4,241.0 599.3,243.0 599.9,244.6 596.7,245.6 594.2,245.1 593.6,242.5Z" fill="#c6e2c7"/>
<path d="M592.1,245.1 594.2,245.1 596.7,245.6 599.9,244.6 602.5,245.6 598.3,249.3 595.2,250.8 593.6,251.5 592.6,249.3 592.1,247.2Z" fill="#dff1e0"/>
<path d="M584.8,187.5 588.8,188.7 593.4,189.8 598.0,191.0 601.5,192.1 598.0,193.3 594.6,193.8 592.3,195.6 594.6,196.7 598.0,195.6 601.5,193.8 605.0,192.1 607.3,191.0 611.1,190.4 618.5,187.7 624.0,187.3 631.4,187.7 636.9,186.8 642.4,184.9 648.0,183.1 651.7,185.8 649.8,189.5 655.4,187.7 659.1,185.8 664.6,183.1 670.1,181.8 675.7,181.2 681.2,179.4 688.6,177.5 696.0,176.6 703.3,176.6 710.7,177.5 715.3,178.5 710.7,181.2 707.0,183.1 714.4,183.1 721.8,182.1 729.2,183.1 736.6,184.9 743.9,185.8 751.3,184.0 750.3,185.3 757.0,184.4 763.8,183.9 770.5,185.3 777.3,186.1 784.0,186.6 789.0,187.8 790.7,190.3 797.5,189.5 804.2,190.0 807.6,188.3 814.3,188.6 820.7,189.5 820.7,195.4 819.4,200.4 816.0,197.9 811.8,196.2 807.6,199.6 805.9,202.9 800.8,202.1 795.8,203.8 794.1,200.4 790.7,201.3 787.4,203.8 792.4,205.5 793.3,208.8 790.7,212.2 787.4,214.7 784.0,218.1 782.3,213.9 782.0,209.7 784.8,207.2 784.8,202.1 780.6,204.6 775.6,205.5 768.8,205.1 760.4,205.5 753.7,208.8 750.3,212.2 753.7,214.7 757.9,215.6 759.6,218.1 757.9,222.3 755.4,225.7 752.0,229.0 748.6,230.7 745.3,229.0 746.9,224.8 747.8,223.1 740.2,221.5 736.8,218.1 733.5,214.7 730.1,214.2 729.2,214.4 726.4,216.3 723.6,220.9 725.5,224.2 721.8,220.9 718.1,219.1 710.7,220.0 703.3,219.1 696.0,216.8 688.6,217.2 681.2,218.7 676.6,220.9 674.7,221.8 673.8,220.0 666.4,218.1 660.9,216.3 655.4,213.5 649.8,212.6 642.4,211.7 633.2,213.5 625.8,217.2 618.5,218.1 612.9,220.0 611.1,223.7 610.7,226.1 611.9,229.6 610.7,232.5 607.3,231.9 603.8,230.7 600.4,229.0 598.0,227.3 595.7,225.6 598.0,225.0 599.8,223.3 600.4,220.9 598.0,219.2 594.6,218.1 591.1,216.9 588.8,215.2 586.5,213.4 584.2,211.1 583.1,209.4 581.3,207.1 581.9,204.8 583.6,203.1 584.2,200.8 584.8,197.3 584.2,192.7 582.5,189.2Z" fill="#5bac5a"/>
<path d="M618.5,184.9 624.0,182.1 631.4,179.9 638.8,178.1 645.2,177.0 643.4,178.8 636.9,180.3 629.5,182.5 624.0,184.9 619.9,186.2Z" fill="#5bac5a"/>
<path d="M683.0,172.9 692.3,172.0 701.5,173.3 696.0,174.4 688.6,174.4Z" fill="#5bac5a"/>
<path d="M752.0,179.4 758.7,178.5 765.5,179.4 760.4,180.5 753.7,180.5Z" fill="#5bac5a"/>
<path d="M760.4,213.0 762.1,215.6 762.9,220.6 762.1,225.7 760.4,227.4 760.4,222.3 760.8,217.3Z" fill="#5bac5a"/>
<path d="M610.8,221.2 613.9,218.6 619.1,217.6 625.3,218.6 631.5,218.1 633.6,216.0 635.7,215.0 633.2,213.5 642.4,211.7 649.8,212.6 655.4,213.5 660.9,216.3 666.4,218.1 673.8,220.0 674.7,221.8 664.7,226.9 661.6,229.5 657.5,230.6 652.3,231.1 648.1,232.6 645.0,232.1 641.9,230.6 638.8,228.5 634.6,228.0 630.5,227.5 626.3,226.9 624.3,229.0 621.1,229.5 618.0,227.5 619.6,225.4 617.0,224.9 613.4,226.4 611.3,224.3Z" fill="#c6e2c7"/>
<path d="M676.6,220.9 681.2,218.7 688.6,217.2 696.0,216.8 703.3,219.1 710.7,220.0 718.1,219.1 721.8,220.9 725.5,224.2 720.0,226.1 714.4,227.9 710.7,230.5 703.3,232.3 696.0,231.6 688.6,230.5 683.0,227.4 679.4,224.6Z" fill="#dff1e0"/>
<path d="M654.4,235.7 660.9,232.9 666.4,228.3 672.0,223.7 674.7,221.8 676.6,220.9 679.4,224.6 683.0,227.4 688.6,230.5 696.0,231.6 703.3,232.3 710.7,230.5 714.4,227.9 720.0,226.1 725.5,224.2 723.6,220.9 726.4,216.3 729.2,214.4 733.5,214.7 736.8,218.1 740.2,221.5 747.8,223.1 746.9,225.7 744.4,227.4 742.7,230.7 736.8,232.4 731.8,234.1 726.7,236.6 723.4,238.3 726.7,240.0 728.4,242.5 726.7,245.9 728.4,250.9 727.6,256.0 723.4,259.4 723.8,255.1 721.7,257.9 719.0,260.7 715.5,262.8 712.0,264.1 708.6,263.4 706.5,262.1 703.0,262.8 700.3,262.1 696.8,262.8 694.0,263.4 692.7,262.8 693.4,260.7 692.7,257.9 691.3,256.5 689.2,255.1 687.8,253.1 683.7,254.4 679.5,255.8 675.4,255.1 670.5,253.1 666.4,251.7 662.9,250.3 660.8,246.8 659.4,243.4 656.7,242.7 656.0,239.2 653.9,235.8Z" fill="#266926"/>
<path d="M736.0,239.1 738.5,237.5 740.5,239.1 740.2,242.5 737.7,244.2 736.0,242.5Z" fill="#388736"/>
<path d="M736.8,234.1 740.2,232.4 742.7,234.1 740.5,239.1 738.5,237.5 736.0,239.1Z" fill="#dff1e0"/>
<path d="M760.1,227.4 764.6,228.2 766.8,229.9 764.1,232.1 760.4,231.1Z" fill="#5bac5a"/>
<path d="M759.6,232.4 761.8,234.1 762.1,238.3 760.8,242.5 757.4,245.2 752.8,246.6 747.8,247.9 743.6,249.6 740.9,248.7 741.9,246.2 746.6,244.7 751.7,243.5 755.7,241.7 758.4,239.1 759.1,235.8Z" fill="#5bac5a"/>
<path d="M624.8,228.5 626.9,226.9 630.5,227.5 634.6,228.0 638.8,229.0 640.9,231.1 642.9,233.2 646.1,233.7 648.1,232.6 649.7,234.2 646.6,235.2 644.0,235.8 641.4,237.3 638.8,235.2 635.7,233.2 631.5,231.6 628.4,231.6 625.8,230.6Z" fill="#dff1e0"/>
<path d="M621.1,234.2 622.2,232.1 625.8,231.1 628.4,231.6 631.5,231.6 635.7,233.5 638.8,235.6 641.4,237.6 638.8,239.9 635.7,241.0 632.6,240.4 629.4,238.4 626.3,237.8 623.2,238.4 621.7,236.8Z" fill="#f1f8f1"/>
<path d="M646.1,233.7 649.7,232.1 653.3,231.1 657.5,230.6 656.4,233.2 653.3,234.7 650.2,235.2 648.1,237.3 645.0,237.3 644.0,235.8 646.6,235.2Z" fill="#c6e2c7"/>
<path d="M601.4,231.6 605.6,231.1 609.7,231.6 612.3,233.2 614.9,235.8 612.3,236.3 609.2,235.8 607.1,235.2 606.6,234.7 603.5,234.2Z" fill="#c6e2c7"/>
<path d="M633.1,244.6 635.7,241.5 638.8,240.4 641.9,238.4 645.0,237.6 648.1,237.6 650.2,238.4 649.2,241.0 647.6,243.5 646.1,246.1 643.5,248.2 639.8,249.8 636.7,250.8 633.6,251.3 632.6,248.2Z" fill="#f1f8f1"/>
<path d="M636.2,253.9 635.7,251.3 639.8,250.0 643.5,248.4 646.1,246.3 647.6,243.9 649.2,241.2 652.3,241.5 655.9,242.5 654.4,244.6 654.9,247.2 653.3,249.8 650.7,251.9 648.1,253.9 646.6,256.0 647.6,258.6 645.5,260.2 642.9,259.1 640.9,257.0 638.3,257.6 635.7,256.5Z" fill="#9bcf9b"/>
<path d="M608.7,238.4 612.3,236.8 615.4,238.7 617.5,240.1 621.1,239.7 623.2,238.7 626.3,238.0 629.4,238.7 632.6,240.7 633.1,244.6 632.6,248.2 633.6,251.3 635.7,253.9 635.2,256.5 631.5,257.6 627.9,256.5 625.3,255.0 623.2,256.0 620.1,254.4 617.0,251.9 614.4,249.8 612.3,247.2 610.2,244.6 609.2,241.5Z" fill="#5bac5a"/>
<path d="M653.9,244.1 656.7,242.7 659.4,243.4 660.8,246.8 662.9,250.3 666.4,253.1 670.5,255.1 675.4,256.5 676.7,258.6 679.5,256.5 683.7,254.4 687.8,253.1 689.2,255.1 687.1,257.2 685.1,259.3 683.7,261.4 681.6,260.7 680.2,262.8 677.4,264.1 674.7,265.5 672.6,267.6 669.1,270.4 666.4,273.1 664.3,276.6 662.9,280.1 661.5,283.5 659.4,282.8 657.4,279.4 655.3,274.5 653.2,269.7 651.8,265.9 649.7,266.4 648.1,263.8 649.7,262.2 648.1,260.7 647.6,258.6 646.6,256.0 648.1,253.9 650.7,251.9 653.3,249.8 654.9,247.2 654.4,244.6 655.9,242.5Z" fill="#5bac5a"/>
<path d="M662.2,283.5 664.0,282.8 665.4,285.6 664.6,288.4 662.6,287.7Z" fill="#c6e2c7"/>
<path d="M666.4,251.7 670.5,253.1 675.4,255.1 675.4,256.5 670.5,255.1 666.4,253.1Z" fill="#c6e2c7"/>
<path d="M679.5,255.1 683.0,254.9 683.0,256.2 679.8,256.5Z" fill="#dff1e0"/>
<path d="M678.1,258.6 680.9,257.2 683.0,259.3 682.3,262.8 680.2,262.8 678.8,260.7Z" fill="#c6e2c7"/>
<path d="M681.9,260.1 685.1,257.5 688.9,255.6 692.1,257.5 692.7,261.3 692.1,265.1 690.8,268.3 690.1,271.5 688.9,270.9 687.0,273.4 685.1,270.9 684.4,267.1 682.5,263.9Z" fill="#f1f8f1"/>
<path d="M692.1,267.7 695.2,266.4 699.0,269.0 701.6,271.5 702.2,274.7 699.0,275.9 697.1,274.0 695.2,276.6 693.3,279.7 692.7,283.5 694.6,286.7 697.1,290.5 699.0,293.7 700.3,296.2 698.4,295.6 695.9,292.4 693.3,288.6 691.7,284.8 691.4,280.4 692.1,275.3 690.1,271.5 690.8,268.3Z" fill="#9bcf9b"/>
<path d="M692.7,261.3 695.2,263.9 699.0,262.6 702.8,265.1 705.4,268.3 707.3,272.1 706.0,274.0 703.5,272.1 701.6,271.5 699.0,269.0 695.9,266.7 692.1,267.7 692.1,265.1Z" fill="#dff1e0"/>
<path d="M699.0,262.6 702.8,261.3 706.6,263.2 708.5,266.4 707.3,269.0 708.9,272.1 710.4,275.9 709.8,279.1 707.3,281.0 704.1,283.5 702.8,282.3 706.0,279.1 707.3,275.9 706.0,274.0 707.3,272.1 705.4,268.3 702.8,265.1Z" fill="#c6e2c7"/>
<path d="M699.0,275.9 702.2,274.7 706.0,274.3 707.3,276.3 706.0,279.4 702.8,281.9 700.3,280.4Z" fill="#c6e2c7"/>
<path d="M708.5,267.1 711.1,266.8 711.2,268.7 708.8,269.0Z" fill="#266926"/>
<path d="M726.3,259.4 728.0,259.2 728.2,263.6 726.6,263.9Z" fill="#c6e2c7"/>
<path d="M695.2,289.9 697.8,291.2 699.7,294.3 700.3,296.9 698.4,296.2 696.2,293.1Z" fill="#c6e2c7"/>
<path d="M687.0,289.3 690.1,289.9 694.0,293.7 697.8,298.1 701.6,301.3 703.5,304.5 703.5,307.0 700.3,305.7 696.5,301.9 692.7,297.5 688.9,293.1Z" fill="#c6e2c7"/>
<path d="M715.7,334.9 719.8,330.8 726.1,327.7 731.2,324.6 735.4,321.4 739.6,320.4 742.7,317.3 747.9,316.2 752.0,318.3 751.0,321.4 755.1,324.6 758.2,325.6 759.7,320.4 760.9,315.6 763.0,319.4 764.5,323.5 766.5,327.7 770.7,330.8 773.8,334.9 776.9,339.1 778.4,343.2 777.5,348.4 774.8,352.6 772.8,356.7 769.7,358.8 764.5,359.4 759.3,357.8 756.2,354.7 754.1,350.5 752.0,352.6 747.9,349.5 741.6,348.4 734.4,349.5 728.1,351.5 721.9,353.0 718.2,351.5 718.8,346.3 716.7,341.2Z" fill="#388736"/>
<path d="M764.5,362.5 769.7,362.5 769.2,365.0 766.5,367.1 765.1,365.0Z" fill="#388736"/>
<path d="M808.7,352.6 811.2,354.7 815.3,356.7 817.8,357.8 815.3,360.9 812.2,363.0 811.2,358.8Z" fill="#5bac5a"/>
<path d="M811.2,361.9 809.1,365.0 804.9,368.1 800.8,370.8 798.7,370.2 802.9,367.1 807.0,364.0Z" fill="#5bac5a"/>
<path d="M743.4,299.7 746.0,298.8 749.1,300.7 753.0,301.9 758.7,303.2 758.7,311.5 756.1,310.8 752.3,307.7 749.1,305.1 746.0,303.8 744.1,302.2Z" fill="#c6e2c7"/>
<path d="M758.7,303.2 762.5,303.8 766.9,305.7 769.4,308.3 772.6,312.1 774.5,314.6 771.3,314.0 768.2,311.5 764.4,310.8 761.2,311.8 758.7,311.5Z" fill="#dff1e0"/>
<path d="M770.1,307.0 774.5,305.7 776.7,305.1 775.8,307.3 772.0,308.0Z" fill="#dff1e0"/>
<path d="M708.5,296.2 711.7,294.3 715.5,291.8 719.3,288.6 721.9,287.4 723.8,289.9 722.5,293.1 721.9,296.9 720.6,300.7 717.4,303.8 713.6,303.2 710.4,301.3 708.9,298.8Z" fill="#c6e2c7"/>
<path d="M703.5,307.7 709.2,308.9 715.5,310.2 721.9,311.5 725.7,312.7 723.1,313.6 716.8,312.7 710.4,311.5 704.7,309.8Z" fill="#c6e2c7"/>
<path d="M726.7,313.1 730.7,312.3 735.8,311.1 736.1,312.1 731.4,313.6 727.2,314.1Z" fill="#c6e2c7"/>
<path d="M737.7,308.9 740.9,308.3 741.2,309.6 738.1,310.1Z" fill="#c6e2c7"/>
<path d="M724.4,297.5 728.2,296.2 733.3,295.6 732.7,297.5 728.8,298.8 729.5,301.9 730.7,305.7 728.8,306.4 727.6,303.8 726.3,306.4 724.4,305.7 724.7,301.9Z" fill="#c6e2c7"/>
<path d="M737.1,295.6 739.0,295.6 739.1,300.7 737.3,300.4Z" fill="#c6e2c7"/>
<path d="M742.2,298.8 744.1,298.4 744.5,300.4 742.7,300.7Z" fill="#c6e2c7"/>
<path d="M725.7,270.2 728.2,269.0 729.5,272.1 728.8,275.9 730.7,278.5 733.3,279.7 735.2,282.3 733.9,283.5 731.4,282.3 729.5,279.7 727.2,276.6 725.9,273.4Z" fill="#c6e2c7"/>
<path d="M730.1,282.3 733.3,284.8 735.8,285.4 736.1,288.6 733.9,289.5 732.0,287.4 730.5,284.8Z" fill="#c6e2c7"/>
<path d="M721.2,284.8 724.4,281.0 725.4,281.9 722.5,285.7Z" fill="#c6e2c7"/>
<path d="M763.8,276.4 765.1,276.4 765.1,277.2 763.8,277.2Z" fill="#dff1e0"/>
<path d="M753.5,282.6 754.7,282.6 754.7,283.4 753.5,283.4Z" fill="#dff1e0"/>
<path d="M785.2,286.8 786.5,286.8 786.5,287.6 785.2,287.6Z" fill="#dff1e0"/>
<path d="M792.9,289.5 794.2,289.5 794.2,290.3 792.9,290.3Z" fill="#dff1e0"/>
<path d="M808.1,293.6 809.3,293.6 809.3,294.4 808.1,294.4Z" fill="#dff1e0"/>
<path d="M810.6,297.1 811.8,297.1 811.8,298.0 810.6,298.0Z" fill="#dff1e0"/>
<path d="M812.6,300.7 813.9,300.7 813.9,301.5 812.6,301.5Z" fill="#dff1e0"/>
<path d="M783.6,309.0 784.8,309.0 784.8,309.8 783.6,309.8Z" fill="#dff1e0"/>
<path d="M787.7,311.7 789.0,311.7 789.0,312.5 787.7,312.5Z" fill="#dff1e0"/>
<path d="M791.5,314.4 792.7,314.4 792.7,315.2 791.5,315.2Z" fill="#dff1e0"/>
<path d="M799.1,322.3 800.4,322.3 800.4,323.1 799.1,323.1Z" fill="#dff1e0"/>
<path d="M818.4,323.7 819.7,323.7 819.7,324.6 818.4,324.6Z" fill="#dff1e0"/>
<path d="M794.6,329.7 799.8,333.1 799.1,333.9 794.2,330.8Z" fill="#dff1e0"/>
</g>
<g stroke="none">
<rect x="245.8" y="157" width="16.8" height="47.6" rx="8.4" fill="#064606"/>
<rect x="237.8" y="172.2" width="33.2" height="17.4" rx="8.7" fill="#064606"/>
<path d="M254.2,160.6 L259,168.8 L249.4,168.8Z M254.2,201.6 L259,193.5 L249.4,193.5Z M241.2,180.9 L249.4,176.1 L249.4,185.7Z M267.2,180.9 L259,176.1 L259,185.7Z" fill="#fff"/>
<rect x="245.8" y="209.8" width="16.8" height="48" rx="8.2" fill="#064606"/>
<path d="M249.7,218.2h3.8v-3.8h1.5v3.8h3.8v1.5h-3.8v3.8h-1.5v-3.8h-3.8Z M249.8,248.4h9v1.7h-9Z" fill="#fff"/>
<g fill="none" stroke="#8f8fe0" stroke-width="0.7"><circle cx="254.2" cy="233.6" r="6.6"/><ellipse cx="254.2" cy="233.6" rx="3.2" ry="6.6"/><path d="M247.6,233.6h13.2M254.2,227v13.2M248.6,230.2h11.2M248.6,237h11.2"/></g>
</g>
</svg>

  <div class="abs" style="left:8px;top:360px;width:136px;height:18px;background:linear-gradient(to right,#ffffff 0,#d8ead8 15%,#a5cda5 35%,#6fae6f 55%,#3f943f 72%,#158015 85%,#0c5c0c 94%,#084a08 100%)"></div>
  <div class="abs" style="left:10px;top:360px;font-size:11.8px;line-height:14px;color:#222">0</div>
  <div class="abs" style="left:99px;top:360px;font-size:11.8px;line-height:14px;color:#1a1a1a">76,608</div>
  <div class="hr" style="top:386px"></div>

  <div class="abs lbl" style="left:18px;top:394.7px">Report View by Selection</div>
  <div class="abs lbl link" style="left:561px;top:394.7px">Customize</div>

  <div class="abs" style="left:0;top:419px;width:639px;height:34px;background:#f4f4f4;border-top:1px solid #d4d4d4"></div>
  <div class="abs lbl" style="left:12px;top:423px;line-height:13px">Total:</div><div class="abs lbl" style="left:20px;top:436px;line-height:13px">6</div>
  <div class="abs lbl" style="left:73px;top:427px">Research Fields</div>
  <div class="abs lbl" style="left:194px;top:423px;text-align:center;line-height:13px">Web of Science<br>Documents</div>
  <div class="abs" style="left:322px;top:427px;font-size:13.35px;line-height:16px;color:#4a78a8">Cites</div>
  <div class="abs" style="left:356px;top:434px;width:0;height:0;border-left:3.5px solid transparent;border-right:3.5px solid transparent;border-top:4px solid #5a8ac0"></div>
  <div class="abs lbl" style="left:412px;top:427px">Cites/Paper</div>
  <div class="abs lbl" style="left:533px;top:427px">Top Papers</div>

  <div class="row" style="top:453px;height:29px">
    <span class="num" style="right:588px;top:6px">1</span>
    <span class="link" style="left:73px;top:3px;line-height:10.5px;font-size:12.55px">MATERIALS<br>SCIENCE</span>
    <span class="num" style="right:346px;top:6px">934</span><span class="num" style="right:246px;top:6px">10,948</span><span class="num" style="right:141px;top:6px">11.72</span>
    <div class="bar" style="top:6px"><b style="width:33px"></b><em>31</em></div>
  </div>
  <div class="row" style="top:482px;height:23px">
    <span class="num" style="right:588px;top:3px">2</span>
    <span class="link" style="left:73px;top:3.5px;font-size:12.55px">ENGINEERING</span>
    <span class="num" style="right:346px;top:3px">1,504</span><span class="num" style="right:246px;top:3px">10,914</span><span class="num" style="right:141px;top:3px">7.26</span>
    <div class="bar" style="top:3px"><b style="width:47px"></b><em>45</em></div>
  </div>
  <div class="row" style="top:505px;height:23px">
    <span class="num" style="right:588px;top:3px">3</span>
    <span class="link" style="left:73px;top:3.5px;font-size:12.55px">CHEMISTRY</span>
    <span class="num" style="right:346px;top:3px">788</span><span class="num" style="right:246px;top:3px">9,378</span><span class="num" style="right:141px;top:3px">11.90</span>
    <div class="bar" style="top:3px"><b style="width:35px"></b><em>33</em></div>
  </div>
  <div class="row" style="top:528px;height:23px">
    <span class="num" style="right:588px;top:3px">4</span>
    <span class="link" style="left:73px;top:3.5px;font-size:12.55px">MATHEMATICS</span>
    <span class="num" style="right:346px;top:3px">478</span><span class="num" style="right:246px;top:3px">5,158</span><span class="num" style="right:141px;top:3px">10.79</span>
    <div class="bar" style="top:3px"><b style="width:89px"></b><em style="color:#fff">85</em></div>
  </div>
  <div class="row" style="top:551px;height:29px">
    <span class="num" style="right:588px;top:6px">5</span>
    <span class="link" style="left:73px;top:3px;line-height:10.5px;font-size:12.55px">COMPUTER<br>SCIENCE</span>
    <span class="num" style="right:346px;top:6px">333</span><span class="num" style="right:246px;top:6px">4,376</span><span class="num" style="right:141px;top:6px">13.14</span>
    <div class="bar" style="top:6px"><b style="width:36px"></b><em>34</em></div>
  </div>
  <div class="row" style="top:580px;height:23px">
    <span class="num" style="right:588px;top:3px">0</span>
    <span class="link" style="left:73px;top:3.5px;font-size:12.55px">ALL FIELDS</span>
    <span class="num" style="right:346px;top:3px">4,975</span><span class="num" style="right:246px;top:3px">48,666</span><span class="num" style="right:141px;top:3px">9.78</span>
    <div class="bar" style="top:3px"><b style="width:89px"></b><em style="color:#fff">246</em></div>
  </div>
</div>
<div class="abs" style="left:866px;top:87px;width:1px;height:639px;background:#b8c0c6"></div>
</body>
</html>
